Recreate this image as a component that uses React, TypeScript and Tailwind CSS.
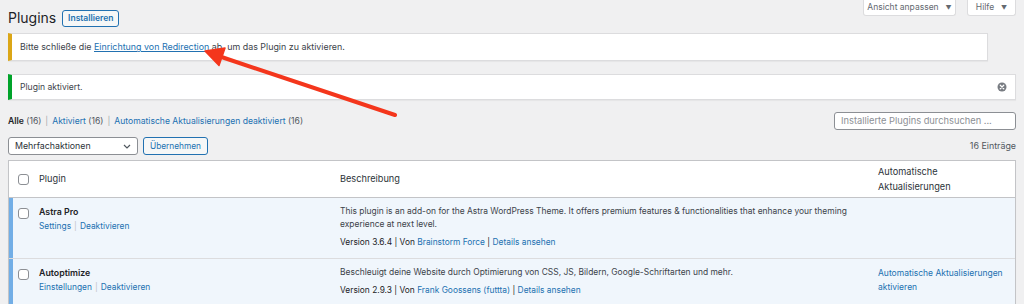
import React from "react";

const link = "text-[#2271b1]";

function Checkbox() {
  return <span className="block h-[11px] w-[11px] rounded-[3px] border border-[#8c8f94] bg-white" />;
}

function DismissIcon() {
  return (
    <svg width="10" height="10" viewBox="0 0 20 20" className="text-[#787c82]">
      <circle cx="10" cy="10" r="9" fill="currentColor" />
      <path d="M6.5 6.5l7 7M13.5 6.5l-7 7" stroke="#fff" strokeWidth="2.4" strokeLinecap="round" />
    </svg>
  );
}

function Arrow() {
  return (
    <svg className="pointer-events-none absolute left-0 top-0" width="1024" height="304">
      <line x1="395" y1="115" x2="220" y2="56.5" stroke="#f4361c" strokeWidth="4" strokeLinecap="round" />
      <polygon points="205,51 225,48 219,65.5" fill="#f4361c" stroke="#f4361c" strokeWidth="1.5" strokeLinejoin="round" />
    </svg>
  );
}

type Row = {
  name: string;
  links: string[];
  desc: string;
  version: string;
  author: string;
  auto?: boolean;
};

const rows: Row[] = [
  {
    name: "Astra Pro",
    links: ["Settings", "Deaktivieren"],
    desc: "This plugin is an add-on for the Astra WordPress Theme. It offers premium features & functionalities that enhance your theming experience at next level.",
    version: "3.6.4",
    author: "Brainstorm Force",
  },
  {
    name: "Autoptimize",
    links: ["Einstellungen", "Deaktivieren"],
    desc: "Beschleuigt deine Website durch Optimierung von CSS, JS, Bildern, Google-Schriftarten und mehr.",
    version: "2.9.3",
    author: "Frank Goossens (futtta)",
    auto: true,
  },
];

export default function App() {
  return (
    <div
      className="relative h-[304px] w-[1024px] overflow-hidden bg-[#f0f0f1] px-2 text-[#3c434a]"
      style={{ fontFamily: "Inter, 'Noto Sans', sans-serif" }}
    >
      {/* Top bar */}
      <div className="flex h-[33px] items-start justify-between">
        <div className="flex items-center gap-[6px] pt-[9px]">
          <h1 className="text-[14px] leading-[18px] text-[#1d2327]">Plugins</h1>
          <button className="h-[17px] w-[57px] rounded-[3px] border border-[#2271b1] bg-[#f6f7f7] text-[8.5px] font-semibold leading-[15px] text-[#2271b1]">
            Installieren
          </button>
        </div>
        <div className="flex gap-[11px] whitespace-nowrap">
          <div className="flex h-[16px] w-[93px] items-center justify-center gap-[7px] rounded-b-[3px] border border-t-0 border-[#dcdcde] bg-white text-[8.5px] text-[#646970]">
            Ansicht anpassen <span className="text-[6px]">▼</span>
          </div>
          <div className="flex h-[16px] w-[49px] items-center justify-center gap-[7px] rounded-b-[3px] border border-t-0 border-[#dcdcde] bg-white text-[8.5px] text-[#646970]">
            Hilfe <span className="text-[6px]">▼</span>
          </div>
        </div>
      </div>

      {/* Notices */}
      <div className="mr-[28px] flex h-[28px] items-center border border-l-4 border-[#dcdcde] border-l-[#dba617] bg-white pl-2 text-[8.9px] shadow-[0_1px_1px_rgba(0,0,0,0.04)]">
        <p>
          Bitte schließe die <span className={`${link} underline`}>Einrichtung von Redirection</span> ab, um das Plugin zu
          aktivieren.
        </p>
      </div>
      <div className="mt-[13px] flex h-[26px] items-center justify-between border border-l-4 border-[#dcdcde] border-l-[#00a32a] bg-white pl-2 pr-[8px] shadow-[0_1px_1px_rgba(0,0,0,0.04)]">
        <p className="text-[8.6px]">Plugin aktiviert.</p>
        <DismissIcon />
      </div>

      {/* Filters + search */}
      <div className="mt-[12px] flex h-[18px] items-center justify-between">
        <div className="flex items-center gap-[4px] text-[8.6px]">
          <span>
            <b className="font-semibold text-[#1d2327]">Alle</b> <span className="text-[#50575e]">(16)</span>
          </span>
          <span className="text-[#a7aaad]">|</span>
          <span>
            <span className={link}>Aktiviert</span> <span className="text-[#50575e]">(16)</span>
          </span>
          <span className="text-[#a7aaad]">|</span>
          <span>
            <span className={link}>Automatische Aktualisierungen deaktiviert</span>{" "}
            <span className="text-[#50575e]">(16)</span>
          </span>
        </div>
        <div className="flex h-[18px] w-[182px] items-center rounded-[3px] border border-[#8c8f94] bg-white px-[6px] text-[9.3px] text-[#8c8f94]">
          Installierte Plugins durchsuchen ...
        </div>
      </div>

      {/* Bulk actions */}
      <div className="mt-[7px] flex h-[18px] items-center justify-between">
        <div className="flex gap-[5px]">
          <div className="flex h-[18px] w-[130px] items-center justify-between rounded-[3px] border border-[#8c8f94] bg-white pl-[6px] pr-[6px] text-[8.8px] text-[#2c3338]">
            Mehrfachaktionen
            <svg width="8" height="5" viewBox="0 0 8 5">
              <path d="M1 1l3 3 3-3" fill="none" stroke="#50575e" strokeWidth="1.2" />
            </svg>
          </div>
          <button className="h-[18px] w-[65px] rounded-[3px] border border-[#2271b1] bg-[#f6f7f7] text-[8.3px] text-[#2271b1]">
            Übernehmen
          </button>
        </div>
        <span className="text-[8.9px] text-[#50575e]">16 Einträge</span>
      </div>

      {/* Table */}
      <div className="mt-[5px] border border-[#c3c4c7] bg-white shadow-[0_1px_1px_rgba(0,0,0,0.04)]">
        <div className="grid h-[37px] grid-cols-[30px_301px_538px_1fr] items-center border-b border-[#c3c4c7] text-[9.2px] text-[#2c3338]">
          <div className="pl-[9px]">
            <Checkbox />
          </div>
          <div>Plugin</div>
          <div>Beschreibung</div>
          <div className="leading-[15px]">
            Automatische
            <br />
            Aktualisierungen
          </div>
        </div>
        {rows.map((r, i) => (
          <div
            key={r.name}
            className={`grid grid-cols-[30px_301px_538px_1fr] bg-[#f0f6fc] pb-[9px] pt-[7px] shadow-[inset_4px_0_0_#72aee6] ${
              i > 0 ? "border-t border-[#dcdcde]" : ""
            }`}
          >
            <div className="pl-[9px] pt-[3px]">
              <Checkbox />
            </div>
            <div className="leading-[14px]">
              <div className="text-[8.8px] font-semibold text-[#1d2327]">{r.name}</div>
              <div className="flex gap-[3px] text-[8.4px]">
                <span className={link}>{r.links[0]}</span>
                <span className="text-[#c3c4c7]">|</span>
                <span className={link}>{r.links[1]}</span>
              </div>
            </div>
            <div className="pr-[20px] text-[8.45px] leading-[13px]">
              <p>{r.desc}</p>
              <p className="mt-[5px] text-[8.4px] text-[#1d2327]">
                Version {r.version} | Von <span className={link}>{r.author}</span> |{" "}
                <span className={link}>Details ansehen</span>
              </p>
            </div>
            <div className="text-[8.5px] leading-[14px]">
              {r.auto && (
                <span className={link}>
                  Automatische Aktualisierungen
                  <br />
                  aktivieren
                </span>
              )}
            </div>
          </div>
        ))}
      </div>

      <Arrow />
    </div>
  );
}
